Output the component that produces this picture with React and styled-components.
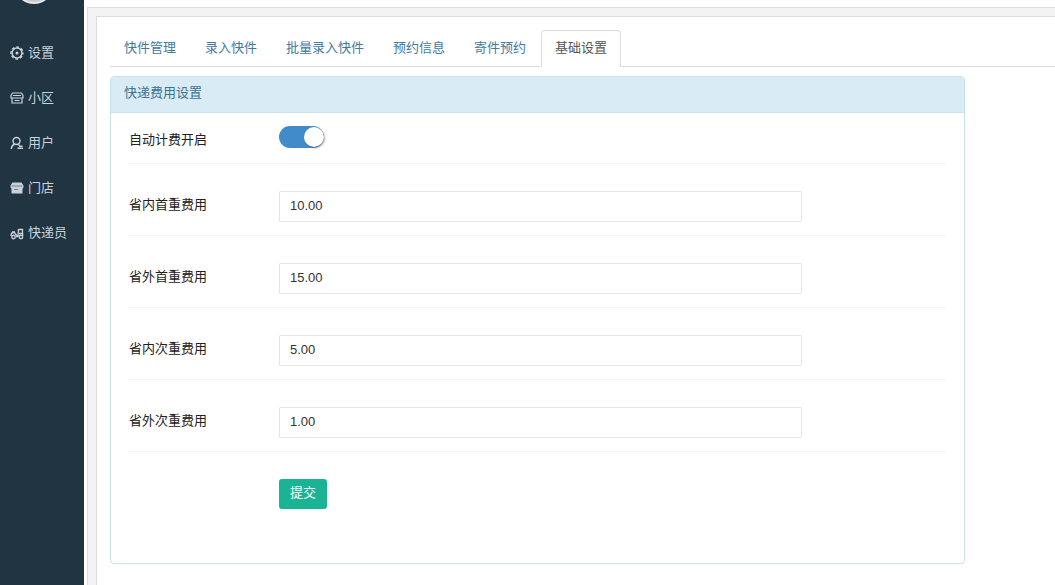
import React from "react";
import styled, { createGlobalStyle } from "styled-components";

const GlobalStyle = createGlobalStyle`
  * {
    box-sizing: border-box;
  }
  body {
    margin: 0;
    background: #f3f3f4;
    color: #333;
    font-family: "Liberation Sans", "Noto Sans CJK SC", sans-serif;
    font-size: 13px;
    line-height: 20px;
  }
`;

const Page = styled.div`
  display: flex;
  min-height: 100vh;
`;

const SideBar = styled.nav`
  flex: 0 0 84px;
  overflow: hidden;
  background: #203442;
`;

const Avatar = styled.div`
  width: 40px;
  height: 40px;
  margin: -36px 0 26px 14px;
  border: 2px solid #e4e8ea;
  border-radius: 50%;
  background: #c9cccd;
`;

const MenuLink = styled.a`
  display: flex;
  align-items: center;
  gap: 4px;
  height: 45px;
  padding-left: 10px;
  color: #c8d2d9;
  text-decoration: none;
  white-space: nowrap;

  svg {
    width: 14px;
    height: 14px;
  }
`;

const Main = styled.main`
  display: flex;
  flex: 1;
  flex-direction: column;
  min-width: 0;
  border-left: 3px solid #fff;
`;

const TopBar = styled.div`
  height: 8px;
  background: #fff;
  border-bottom: 1px solid #ddd;
`;

const Content = styled.div`
  display: flex;
  flex: 1;
  padding: 8px 0 0 8px;
  border-left: 1px solid #ddd;
`;

const Card = styled.section`
  flex: 1;
  min-width: 0;
  padding: 13px 0 20px 13px;
  border: solid #ddd;
  border-width: 1px 0 0 1px;
  background: #fff;
`;

const TabList = styled.div`
  display: flex;
  gap: 1px;
  border-bottom: 1px solid #ddd;
`;

const Tab = styled.button`
  height: 37px;
  margin-bottom: -1px;
  padding: 0 13px 2px;
  border: 1px solid;
  border-color: ${(props) => (props.$active ? "#ddd #ddd #fff" : "transparent")};
  border-radius: 4px 4px 0 0;
  background: ${(props) => (props.$active ? "#fff" : "transparent")};
  color: ${(props) => (props.$active ? "#555" : "#44799f")};
  font: inherit;
  cursor: pointer;
`;

const Panel = styled.form`
  margin: 9px 90px 0 0;
  border: 1px solid #c6e2ea;
  border-radius: 4px;
`;

const PanelHeading = styled.h2`
  height: 36px;
  margin: 0;
  padding: 6px 13px;
  border-bottom: 1px solid #c6e2ea;
  border-radius: 3px 3px 0 0;
  background: #d9ebf4;
  color: #3d7391;
  font-size: 13px;
  font-weight: 400;
  line-height: 20px;
`;

const PanelBody = styled.div`
  padding: 0 18px 40px 17px;
`;

const Row = styled.div`
  display: grid;
  grid-template-columns: 151px 1fr;
  align-items: start;
  padding: ${(props) => (props.$first ? "13px 144px 13px 0" : "27px 144px 13px 0")};
  border-bottom: 1px solid ${(props) => (props.$last ? "transparent" : "#f5f5f5")};
`;

const Label = styled.label`
  padding: 4px 1px 0;
  color: #222;
`;

const TextInput = styled.input`
  width: 100%;
  height: 31px;
  padding: 0 10px 3px;
  border: 1px solid #e5e6e7;
  border-radius: 1px;
  background: #fff;
  color: #333;
  font: 13px/20px "Liberation Sans", sans-serif;
`;

const Switch = styled.input`
  display: flex;
  justify-content: flex-end;
  align-items: center;
  appearance: none;
  width: 45px;
  height: 22px;
  margin: 0;
  border-radius: 11px;
  background: #ccc;
  cursor: pointer;

  &::before {
    content: "";
    width: 20px;
    height: 20px;
    border-radius: 50%;
    background: #fff;
    box-shadow: 1px 1px 2px rgba(0, 0, 0, 0.35);
  }
  &:not(:checked) {
    justify-content: flex-start;
  }
  &:checked {
    background: #428bca;
  }
`;

const SubmitButton = styled.button`
  grid-column: 2;
  justify-self: start;
  height: 30px;
  padding: 0 11px 3px;
  border: 0;
  border-radius: 3px;
  background: #1ab394;
  color: #fff;
  font: inherit;
  cursor: pointer;
`;

const GearIcon = () => (
  <svg viewBox="0 0 28 28" fill="none" stroke="currentColor" aria-hidden="true">
    <circle cx="14" cy="14" r="9.8" strokeWidth="3" />
    <circle cx="14" cy="14" r="12" strokeWidth="3" strokeDasharray="5.425 4" strokeDashoffset="2.7" />
    <circle cx="14" cy="14" r="3" fill="currentColor" stroke="none" />
  </svg>
);

const StoreIcon = () => (
  <svg viewBox="0 0 28 28" fill="none" stroke="currentColor" strokeWidth="2.4" aria-hidden="true">
    <path d="M5 4h18l3 5v5H2V9zM4 14v10h20V14M6 9h16M9 19h10" />
  </svg>
);

const UserIcon = () => (
  <svg viewBox="0 0 28 28" fill="none" stroke="currentColor" strokeWidth="2.8" aria-hidden="true">
    <circle cx="13" cy="10" r="7" />
    <path d="M9 16c-4 2-6 5-6.500 10M16 16l3 3" />
    <path d="M15 24.500h11M18 20.500h7" />
  </svg>
);

const ShopIcon = () => (
  <svg viewBox="0 0 28 28" fill="currentColor" aria-hidden="true">
    <path d="M5 3h18l4 6v3a3.300 3.300 0 0 1-2 3v10H3V15a3.300 3.300 0 0 1-2-3V9z" />
    <path d="M3 10h22M8 17h8" stroke="#203442" strokeWidth="1" />
  </svg>
);

const ScooterIcon = () => (
  <svg viewBox="0 0 28 28" fill="none" stroke="currentColor" strokeWidth="2.6" aria-hidden="true">
    <circle cx="7" cy="22" r="3.500" />
    <circle cx="22" cy="22" r="3.500" />
    <path d="M2 20c0-4 2-7 5-7h2l4 6h3l1-13" />
    <path d="M4 12h6M12 21h5M17 7h8v8h-7M25 15l1 4" />
  </svg>
);

const menu = [
  { name: "设置", Icon: GearIcon },
  { name: "小区", Icon: StoreIcon },
  { name: "用户", Icon: UserIcon },
  { name: "门店", Icon: ShopIcon },
  { name: "快递员", Icon: ScooterIcon },
];

const tabs = ["快件管理", "录入快件", "批量录入快件", "预约信息", "寄件预约", "基础设置"];

const fees = [
  { id: "inFirst", label: "省内首重费用", value: "10.00" },
  { id: "outFirst", label: "省外首重费用", value: "15.00" },
  { id: "inNext", label: "省内次重费用", value: "5.00" },
  { id: "outNext", label: "省外次重费用", value: "1.00" },
];

const App = () => {
  const [active, setActive] = React.useState("基础设置");

  return (
    <Page>
      <GlobalStyle />
      <SideBar>
        <Avatar />
        {menu.map(({ name, Icon }) => (
          <MenuLink href="#" key={name}>
            <Icon />
            {name}
          </MenuLink>
        ))}
      </SideBar>
      <Main>
        <TopBar />
        <Content>
          <Card>
            <TabList role="tablist">
              {tabs.map((tab) => (
                <Tab
                  key={tab}
                  type="button"
                  role="tab"
                  aria-selected={tab === active}
                  $active={tab === active}
                  onClick={() => setActive(tab)}
                >
                  {tab}
                </Tab>
              ))}
            </TabList>
            <Panel onSubmit={(e) => e.preventDefault()}>
              <PanelHeading>快递费用设置</PanelHeading>
              <PanelBody>
                <Row $first>
                  <Label htmlFor="auto">自动计费开启</Label>
                  <Switch id="auto" type="checkbox" defaultChecked />
                </Row>
                {fees.map((fee) => (
                  <Row key={fee.id}>
                    <Label htmlFor={fee.id}>{fee.label}</Label>
                    <TextInput id={fee.id} type="text" defaultValue={fee.value} />
                  </Row>
                ))}
                <Row $last>
                  <SubmitButton type="submit">提交</SubmitButton>
                </Row>
              </PanelBody>
            </Panel>
          </Card>
        </Content>
      </Main>
    </Page>
  );
};

export default App;
